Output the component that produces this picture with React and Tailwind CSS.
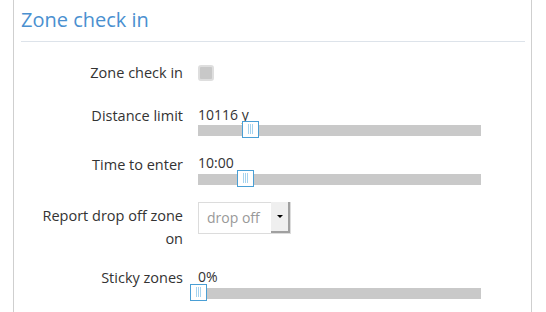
import React from "react";

const font = { fontFamily: '"Open Sans", "Liberation Sans", sans-serif' };

function Handle({ pct }) {
  return (
    <div
      className="absolute top-[-4px] w-[17px] h-[17px] bg-white border border-[#4a9fd5] flex items-center justify-center gap-[1px]"
      style={{ left: `calc(${pct}% - 8px)` }}
    >
      <div className="w-[1px] h-[10px] bg-[#a6d3ee]" />
      <div className="w-[1px] h-[10px] bg-[#a6d3ee]" />
      <div className="w-[1px] h-[10px] bg-[#a6d3ee]" />
    </div>
  );
}

function Slider({ value, pct }) {
  return (
    <div className="pt-[3.5px]">
      <div className="text-[14px] leading-[16px] text-[#333]">{value}</div>
      <div className="relative mt-[2.4px] w-[283px] h-[11px] bg-[#c9c9c9]">
        <Handle pct={pct} />
      </div>
    </div>
  );
}

function Row({ label, children, className = "" }) {
  return (
    <div className={`flex items-start ${className}`}>
      <div className="ml-[12px] w-[151px] shrink-0 pt-[1px] text-right text-[14.5px] leading-[23px] text-[#333] pr-[1px]">
        {label}
      </div>
      <div className="ml-[14px]">{children}</div>
    </div>
  );
}

export default function App() {
  return (
    <div className="w-[546px] h-[312px] bg-white overflow-hidden" style={font}>
      <div className="ml-[13px] w-[519px] min-h-[312px] border-x border-[#cfcfcf]">
        <div className="ml-[7px] mr-[6px] pt-[6px] pb-[7px] border-b border-[#dde3ea]">
          <div className="text-[20px] leading-[28px] text-[#4a90d0]">Zone check in</div>
        </div>
        <div className="ml-[7px] mt-[18px]">
          <Row label="Zone check in">
            <div className="mt-[5px] w-[16px] h-[16px] rounded-[3px] border-2 border-[#dedede] bg-[#c8c8c8]" />
          </Row>
          <Row label="Distance limit" className="mt-[19px]">
            <Slider value="10116 y" pct={18.4} />
          </Row>
          <Row label="Time to enter" className="mt-[16px]">
            <Slider value="10:00" pct={16.6} />
          </Row>
          <Row label={"Report drop off zone on"} className="mt-[18px]">
            <div className="mt-[-1px] flex w-[93px] h-[32px] border border-[#dcdcdc] bg-white">
              <div className="flex-1 pl-[8px] text-[14px] leading-[30px] text-[#999]">drop off</div>
              <div className="w-[19px] h-[31px] mt-[-1px] bg-[#efefef] border-r-2 border-b-2 border-[#a0a0a0] flex items-center justify-center">
                <div className="w-0 h-0 border-l-[3.5px] border-r-[3.5px] border-t-[3.5px] border-l-transparent border-r-transparent border-t-black" />
              </div>
            </div>
          </Row>
          <Row label="Sticky zones" className="mt-[15px]">
            <div className="pt-[1px]">
              <Slider value="0%" pct={0} />
            </div>
          </Row>
        </div>
      </div>
    </div>
  );
}
